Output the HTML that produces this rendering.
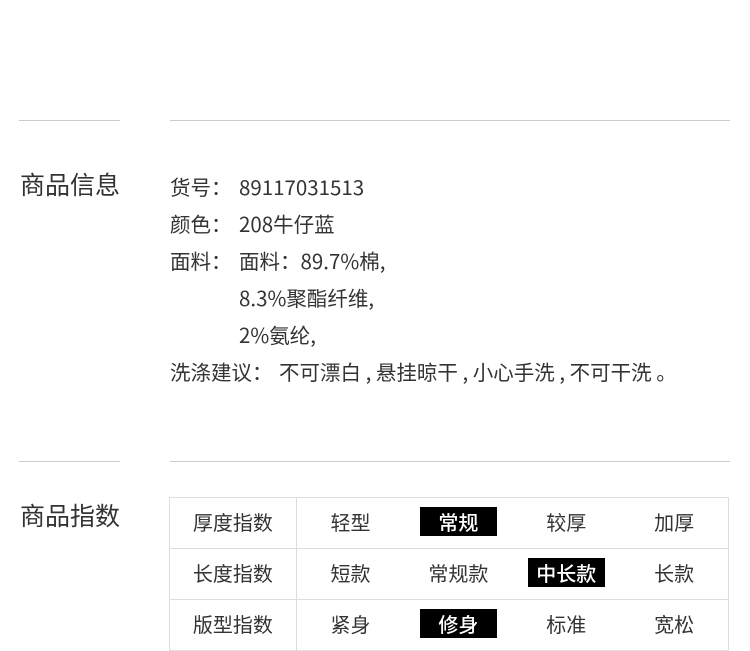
<!DOCTYPE html>
<html><head><meta charset="utf-8"><style>
body{margin:0;width:750px;height:651px;background:#fff;font-family:"Noto Sans CJK SC",sans-serif;color:#333;position:relative;overflow:hidden}
.l{position:absolute;height:1px;background:#ccc}
.h{position:absolute;left:20px;font-size:25px;color:#333;line-height:30px}
.t{position:absolute;left:170px;font-size:20.5px;line-height:37px;top:168px}
.t div{height:37px;white-space:nowrap}
.t b{font-weight:normal;display:inline-block}
table{position:absolute;left:169px;top:497px;border-collapse:collapse;font-size:20px;border:1px solid #ddd;width:560px}
td{border-top:1px solid #ddd;border-bottom:1px solid #ddd;height:47px;padding:0 0 3px;text-align:center;width:108px}
td:first-child{width:126px;border-right:1px solid #ddd}
.b{display:inline-block;background:#000;color:#fff;width:77px;line-height:29px;font-weight:500}
</style></head><body>
<div class="l" style="left:19px;width:101px;top:120px"></div>
<div class="l" style="left:170px;width:560px;top:120px"></div>
<div class="h" style="top:169px">商品信息</div>
<div class="t">
<div><b style="width:69px">货号：</b>89117031513</div>
<div><b style="width:69px">颜色：</b>208牛仔蓝</div>
<div><b style="width:69px">面料：</b>面料：89.7%棉,</div>
<div style="padding-left:69px">8.3%聚酯纤维,</div>
<div style="padding-left:69px">2%氨纶,</div>
<div><b style="width:109px">洗涤建议：</b>不可漂白 , 悬挂晾干 , 小心手洗 , 不可干洗 。</div>
</div>
<div class="l" style="left:19px;width:101px;top:461px"></div>
<div class="l" style="left:170px;width:560px;top:461px"></div>
<div class="h" style="top:500px">商品指数</div>
<table>
<tr><td>厚度指数</td><td>轻型</td><td><span class="b">常规</span></td><td>较厚</td><td>加厚</td></tr>
<tr><td>长度指数</td><td>短款</td><td>常规款</td><td><span class="b">中长款</span></td><td>长款</td></tr>
<tr><td>版型指数</td><td>紧身</td><td><span class="b">修身</span></td><td>标准</td><td>宽松</td></tr>
</table>
</body></html>
